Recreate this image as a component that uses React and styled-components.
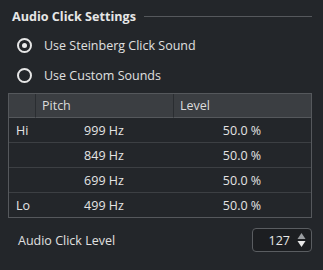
import React from "react";
import styled, { createGlobalStyle } from "styled-components";

const Global = createGlobalStyle`
  html, body { margin: 0; padding: 0; background: #23262a; }
  body { font-family: "Open Sans", "Noto Sans", sans-serif; color: #dcdcdc; }
`;

const Panel = styled.div`
  width: 323px;
  height: 270px;
  box-sizing: border-box;
  padding: 6px 11px 0 8px;
  display: flex;
  flex-direction: column;
`;

const TitleRow = styled.div`
  display: flex;
  align-items: center;
  gap: 8px;
  height: 20px;
  padding-left: 4px;
`;

const Title = styled.div`
  font-weight: 700;
  font-size: 12.6px;
  color: #e6e6e6;
  white-space: nowrap;
`;

const Rule = styled.div`
  flex: 1;
  height: 1px;
  background: #55585c;
`;

const RadioRow = styled.label`
  display: flex;
  align-items: center;
  gap: 12px;
  height: 30px;
  padding-left: 9px;
  font-size: 12.5px;
  color: #e0e0e0;
  margin-top: ${(p) => p.$mt || 0}px;
`;

const RadioCircle = styled.span`
  width: 15px;
  height: 15px;
  border-radius: 50%;
  border: 2px solid #e6e6e6;
  box-sizing: border-box;
  display: flex;
  align-items: center;
  justify-content: center;
  &::after {
    content: "";
    width: 5px;
    height: 5px;
    border-radius: 50%;
    background: ${(p) => (p.$checked ? "#ececec" : "transparent")};
  }
`;

const Table = styled.div`
  margin-top: 3px;
  border: 1px solid #55585c;
  display: grid;
  grid-template-columns: 26px 138px 1fr;
`;

const HeadCell = styled.div`
  height: 23px;
  background: #3b3e42;
  display: flex;
  align-items: center;
  padding-left: 6px;
  font-size: 12.5px;
  color: #dcdcdc;
  border-left: ${(p) => (p.$first ? "none" : "1px solid #2a2d31")};
  border-bottom: 1px solid #55585c;
`;

const Cell = styled.div`
  height: 24px;
  display: flex;
  align-items: center;
  justify-content: ${(p) => (p.$label ? "flex-start" : "center")};
  padding-left: ${(p) => (p.$label ? "7px" : "0")};
  font-size: 12.5px;
  color: #e4e4e4;
  border-bottom: ${(p) => (p.$last ? "none" : "1px solid #3c3f43")};
`;

const Footer = styled.div`
  display: flex;
  align-items: center;
  justify-content: space-between;
  margin-top: 10px;
  padding-left: 10px;
  font-size: 12.5px;
  color: #e0e0e0;
`;

const Spin = styled.div`
  width: 60px;
  height: 24px;
  box-sizing: border-box;
  border: 1px solid #5a5d61;
  border-radius: 4px;
  background: #1c1e21;
  display: flex;
  align-items: center;
  justify-content: flex-end;
  gap: 7px;
  padding-right: 5px;
  font-size: 12.5px;
  color: #e8e8e8;
`;

const rows = [
  ["Hi", "999 Hz", "50.0 %"],
  ["", "849 Hz", "50.0 %"],
  ["", "699 Hz", "50.0 %"],
  ["Lo", "499 Hz", "50.0 %"],
];

export default function App() {
  return (
    <>
      <Global />
      <Panel>
        <TitleRow>
          <Title>Audio Click Settings</Title>
          <Rule />
        </TitleRow>
        <RadioRow $mt={4}>
          <RadioCircle $checked />
          Use Steinberg Click Sound
        </RadioRow>
        <RadioRow>
          <RadioCircle />
          Use Custom Sounds
        </RadioRow>
        <Table>
          <HeadCell $first />
          <HeadCell>Pitch</HeadCell>
          <HeadCell>Level</HeadCell>
          {rows.map((r, i) => (
            <React.Fragment key={i}>
              <Cell $label $last={i === rows.length - 1}>{r[0]}</Cell>
              <Cell $last={i === rows.length - 1}>{r[1]}</Cell>
              <Cell $last={i === rows.length - 1}>{r[2]}</Cell>
            </React.Fragment>
          ))}
        </Table>
        <Footer>
          Audio Click Level
          <Spin>
            127
            <svg width="9" height="16" viewBox="0 0 9 16">
              <path d="M4.5 1 L8.5 7 L0.5 7 Z" fill="#9a9da1" />
              <path d="M4.5 15 L8.5 9 L0.5 9 Z" fill="#e8e8e8" />
            </svg>
          </Spin>
        </Footer>
      </Panel>
    </>
  );
}
